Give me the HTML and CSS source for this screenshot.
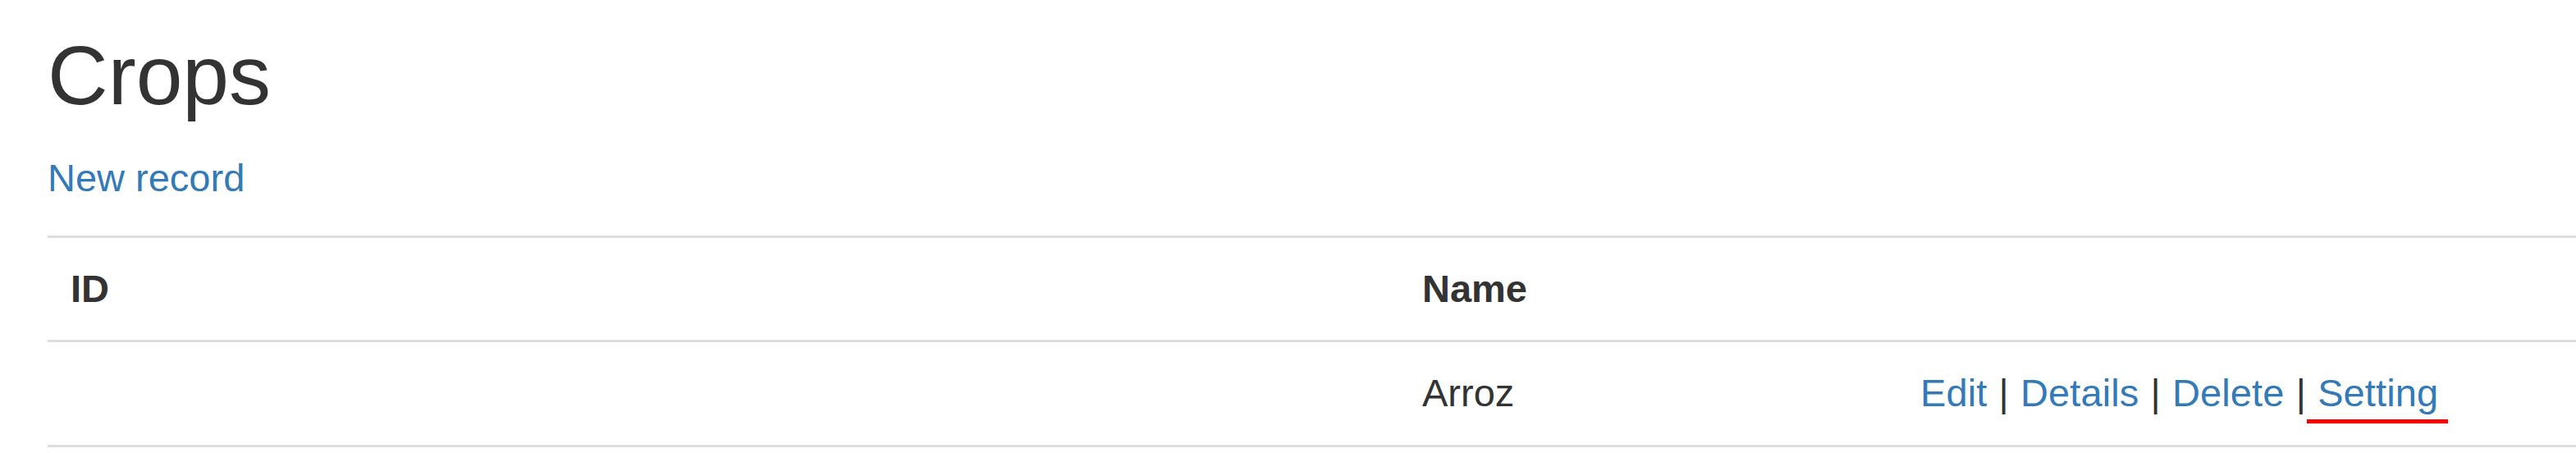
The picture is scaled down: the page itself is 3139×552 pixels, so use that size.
FILE: index.html
```html
<!DOCTYPE html>
<html lang="en">
<head>
<meta charset="utf-8">
<title>Crops</title>
<link rel="stylesheet" href="styles.css">
</head>
<body>
<main class="page">
  <h2 class="title">Crops</h2>
  <p class="new"><a href="#">New record</a></p>
  <table class="grid">
    <colgroup>
      <col class="c-id">
      <col class="c-name">
      <col class="c-act">
    </colgroup>
    <thead>
      <tr>
        <th>ID</th>
        <th>Name</th>
        <th></th>
      </tr>
    </thead>
    <tbody>
      <tr>
        <td></td>
        <td>Arroz</td>
        <td class="actions"><a href="#">Edit</a> | <a href="#">Details</a> | <a href="#">Delete</a> | <a href="#" class="marked">Setting</a></td>
      </tr>
    </tbody>
  </table>
</main>
</body>
</html>
```

FILE: styles.css
```css
html, body {
  margin: 0;
  padding: 0;
  background: #ffffff;
}
body {
  font-family: "Liberation Sans", Arial, Helvetica, sans-serif;
  font-size: 47px;
  line-height: 1.42857;
  color: #333333;
  overflow: hidden;
}
.page {
  padding: 36px 0 0 58px;
}
a {
  color: #337ab7;
  text-decoration: none;
}
.title {
  margin: 0;
  font-size: 102px;
  font-weight: 400;
  line-height: 1.1;
  color: #333333;
}
.new {
  margin: 35px 0 37px 0;
}
.grid {
  width: 3081px;
  border-collapse: collapse;
  border-spacing: 0;
  table-layout: fixed;
}
.c-id { width: 1647px; }
.c-name { width: 607px; }
.grid th,
.grid td {
  text-align: left;
  vertical-align: top;
  padding: 28px 28px 29px 28px;
  border-top: 3px solid #dddddd;
  white-space: nowrap;
}
.grid th {
  font-weight: 700;
}
.grid tbody tr:last-child td {
  border-bottom: 3px solid #dddddd;
}
.actions {
  word-spacing: 1px;
  letter-spacing: 0.1px;
}
.marked {
  position: relative;
}
.marked::after {
  content: "";
  position: absolute;
  left: -13px;
  right: -12px;
  bottom: -11px;
  height: 5px;
  background: #ff0000;
}
```
